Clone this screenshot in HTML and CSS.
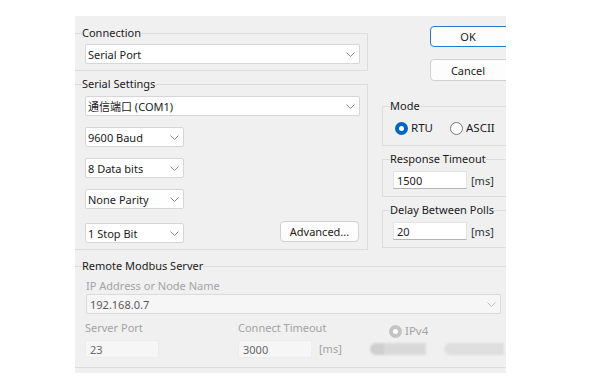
FILE: index.html
```html
<!DOCTYPE html>
<html lang="en">

<head>
  <meta charset="UTF-8">
  <meta name="viewport" content="width=device-width, initial-scale=1.0">
  <title>Connection Setup</title>
  <link rel="stylesheet" href="styles.css">
</head>

<body>
  <div class="dialog">
    <div class="top">
      <!-- left column -->
      <div class="left">
        <fieldset class="group conn">
          <legend>Connection</legend>
          <div class="select wide">
            <span>Serial Port</span>
            <svg class="chev" width="9" height="5" viewBox="0 0 9 5"><polyline points="0.5,0.5 4.5,4.5 8.5,0.5" /></svg>
          </div>
        </fieldset>

        <fieldset class="group serial">
          <legend>Serial Settings</legend>
          <div class="select wide">
            <span>通信端口 (COM1)</span>
            <svg class="chev" width="9" height="5" viewBox="0 0 9 5"><polyline points="0.5,0.5 4.5,4.5 8.5,0.5" /></svg>
          </div>
          <div class="select short">
            <span>9600 Baud</span>
            <svg class="chev" width="9" height="5" viewBox="0 0 9 5"><polyline points="0.5,0.5 4.5,4.5 8.5,0.5" /></svg>
          </div>
          <div class="select short">
            <span>8 Data bits</span>
            <svg class="chev" width="9" height="5" viewBox="0 0 9 5"><polyline points="0.5,0.5 4.5,4.5 8.5,0.5" /></svg>
          </div>
          <div class="select short">
            <span>None Parity</span>
            <svg class="chev" width="9" height="5" viewBox="0 0 9 5"><polyline points="0.5,0.5 4.5,4.5 8.5,0.5" /></svg>
          </div>
          <div class="last-row">
            <div class="select short">
              <span>1 Stop Bit</span>
              <svg class="chev" width="9" height="5" viewBox="0 0 9 5"><polyline points="0.5,0.5 4.5,4.5 8.5,0.5" /></svg>
            </div>
            <button class="btn adv">Advanced...</button>
          </div>
        </fieldset>
      </div>

      <!-- right column -->
      <div class="right">
        <button class="btn ok">OK</button>
        <button class="btn cancel">Cancel</button>

        <fieldset class="group side mode">
          <legend>Mode</legend>
          <div class="radios">
            <label class="radio"><span class="dot on"></span>RTU</label>
            <label class="radio"><span class="dot"></span>ASCII</label>
          </div>
        </fieldset>

        <fieldset class="group side">
          <legend>Response Timeout</legend>
          <div class="field">
            <div class="input">1500</div>
            <span class="unit">[ms]</span>
          </div>
        </fieldset>

        <fieldset class="group side">
          <legend>Delay Between Polls</legend>
          <div class="field">
            <div class="input">20</div>
            <span class="unit">[ms]</span>
          </div>
        </fieldset>
      </div>
    </div>

    <fieldset class="group remote">
      <legend>Remote Modbus Server</legend>
      <div class="muted ip-label">IP Address or Node Name</div>
      <div class="select ip">
        <span>192.168.0.7</span>
        <svg class="chev" width="9" height="5" viewBox="0 0 9 5"><polyline points="0.5,0.5 4.5,4.5 8.5,0.5" /></svg>
      </div>
      <div class="server-grid">
        <div>
          <div class="muted">Server Port</div>
          <div class="input off port">23</div>
        </div>
        <div>
          <div class="muted">Connect Timeout</div>
          <div class="field">
            <div class="input off port">3000</div>
            <span class="unit muted">[ms]</span>
          </div>
        </div>
        <div class="proto">
          <label class="radio muted"><span class="dot off"></span>IPv4</label>
          <div class="smudge">
            <span class="b1"></span><span class="b2"></span><span class="b3"></span><span class="b4"></span>
          </div>
        </div>
      </div>
    </fieldset>
  </div>
</body>

</html>
```

FILE: styles.css
```css
body {
  margin: 0;
  background: #ffffff;
  font-family: "Noto Sans", "Noto Sans CJK SC", sans-serif;
  font-size: 11px;
  color: #1b1b1b;
}

.dialog {
  margin: 16px 0 0 75px;
  width: 431px;
  height: 357px;
  background: #f0f0f0;
  overflow: hidden;
  padding-top: 9px;
  box-sizing: border-box;
}

.top {
  display: grid;
  grid-template-columns: 293px 138px;
  column-gap: 14px;
}

/* group boxes */
.group {
  margin: 0;
  border: 1px solid #dcdcdc;
  border-left: none;
  padding: 0 7px 0 7px;
  min-width: 0;
}

.group legend {
  padding: 0;
  line-height: 16px;
}

.conn {
  padding-bottom: 6px;
}

.conn .select {
  margin-top: 3px;
}

.serial {
  margin-top: 5px;
  padding-bottom: 6px;
}

.serial .select {
  margin-top: 11px;
}

.serial .select:first-of-type {
  margin-top: 4px;
}

.last-row {
  display: flex;
  justify-content: space-between;
  align-items: flex-start;
  margin-top: 10px;
}

.last-row .select {
  margin-top: 0;
}

/* combo boxes */
.select {
  height: 20px;
  box-sizing: border-box;
  border: 1px solid #d6d6d6;
  border-radius: 2px;
  background: #ffffff;
  margin-left: 3px;
  padding: 0 4px 0 2px;
  display: flex;
  align-items: center;
  justify-content: space-between;
}

.select.wide {
  width: 275px;
}

.select.short {
  width: 99px;
}

.chev polyline {
  fill: none;
  stroke: #8a8a8a;
  stroke-width: 1;
}

/* buttons */
.btn {
  font: inherit;
  color: #1b1b1b;
  background: #fdfdfd;
  border: 1px solid #d0d0d0;
  border-radius: 4px;
  height: 21px;
  padding: 0;
  box-sizing: border-box;
}

.adv {
  width: 79px;
  height: 21px;
  margin-top: 2px;
  margin-right: 1px;
}

.right {
  display: flex;
  flex-direction: column;
  align-items: flex-start;
}

.ok,
.cancel {
  width: 150px;
  margin-left: 48px;
  padding-right: 74px;
}

.ok {
  margin-top: 1px;
  border: 1px solid #2a7ac9;
}

.cancel {
  margin-top: 12px;
  height: 22px;
}

.side {
  width: 150px;
  box-sizing: border-box;
  border-left: 1px solid #dcdcdc;
  border-right: none;
  margin-top: 5px;
  padding-bottom: 7px;
}

.mode {
  margin-top: 17px;
  padding-bottom: 9px;
}

.radios {
  display: flex;
  gap: 17px;
  margin-top: 6px;
  margin-left: 5px;
}

.radio {
  display: flex;
  align-items: center;
  gap: 3px;
  line-height: 16px;
  font-size: 11.5px;
}

.dot {
  width: 13px;
  height: 13px;
  box-sizing: border-box;
  border-radius: 50%;
  border: 1px solid #7a7a7a;
  background: #ffffff;
}

.dot.on {
  border: 4px solid #0067c0;
}

.dot.off {
  border: 4px solid #c4c4c4;
}

.field {
  display: flex;
  align-items: center;
  gap: 4px;
}

.side .field {
  margin-top: 4px;
  margin-left: 3px;
}

.input {
  width: 74px;
  height: 18px;
  box-sizing: border-box;
  background: #ffffff;
  border: 1px solid #e2e2e2;
  border-bottom-color: #b4b4b4;
  padding-left: 3px;
  display: flex;
  align-items: center;
}

.unit {
  color: #333333;
}

/* remote server */
.remote {
  margin-top: 8px;
  width: 450px;
  padding-bottom: 9px;
}

.muted {
  color: #a3a3a3;
  line-height: 16px;
}

.ip-label {
  margin-top: 4px;
  margin-left: 4px;
}

.select.ip {
  width: 415px;
  margin-left: 4px;
  background: #f6f6f6;
  border-color: #dadada;
  color: #5a5a5a;
  padding-left: 3px;
}

.select.ip .chev polyline {
  stroke: #bcbcbc;
}

.server-grid {
  display: grid;
  grid-template-columns: 153px 132px 1fr;
  margin-left: 3px;
  margin-top: 6px;
}

.input.off {
  background: #f6f6f6;
  border: 1px solid #ececec;
  color: #666666;
  margin-top: 4px;
  padding-left: 4px;
}

.server-grid .field .input {
  margin-top: 0;
}

.server-grid .field {
  margin-top: 4px;
  gap: 7px;
}

.proto {
  padding-top: 3px;
}

.proto .radio {
  margin-left: 19px;
}

.smudge {
  display: flex;
  margin-top: 4px;
  height: 12px;
  filter: blur(1.2px);
}

.smudge span {
  display: block;
  height: 12px;
}

.smudge .b1 {
  width: 14px;
  background: #cfcfcf;
  border-radius: 6px 0 0 6px;
}

.smudge .b2 {
  width: 42px;
  background: #d9d9d9;
}

.smudge .b3 {
  width: 18px;
  background: #f0f0f0;
}

.smudge .b4 {
  width: 60px;
  background: #dedede;
  border-radius: 6px 0 0 6px;
}
```
